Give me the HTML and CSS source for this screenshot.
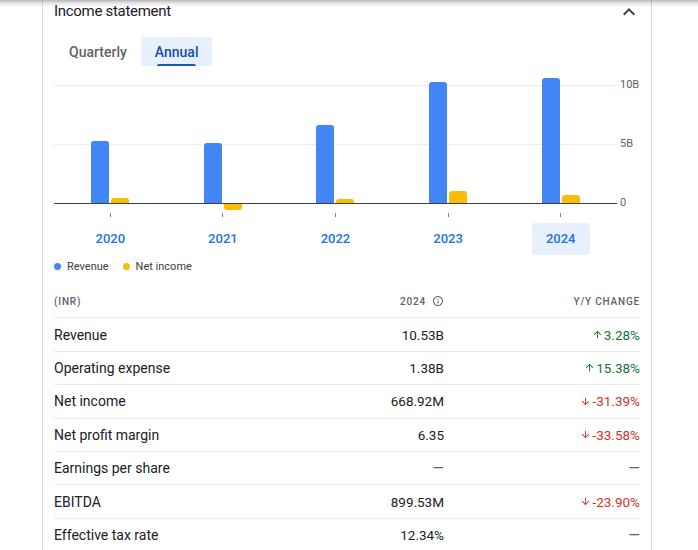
FILE: index.html
```html
<!DOCTYPE html>
<html lang="en">
<head>
<meta charset="utf-8">
<title>Income statement</title>
<link rel="stylesheet" href="styles.css">
</head>
<body>
<div class="shade"></div>
<section class="card">
  <div class="head">
    <h2 class="title">Income statement</h2>
    <span class="chev"><svg viewBox="0 0 24 24" width="24" height="24"><path d="M12 8l-6 6 1.41 1.41L12 10.83l4.59 4.58L18 14z"/></svg></span>
  </div>
  <div class="tabs">
    <button class="tab">Quarterly</button>
    <button class="tab active">Annual</button>
  </div>
  <div class="chart">
    <div class="plot">
      <div class="slot"><span class="bar rev" style="height:62px"></span><span class="bar net" style="height:5px"></span></div>
      <div class="slot"><span class="bar rev" style="height:60px"></span><span class="bar net neg" style="height:6px"></span></div>
      <div class="slot"><span class="bar rev" style="height:78px"></span><span class="bar net" style="height:4px"></span></div>
      <div class="slot"><span class="bar rev" style="height:121px"></span><span class="bar net" style="height:12px"></span></div>
      <div class="slot"><span class="bar rev" style="height:125px"></span><span class="bar net" style="height:8px"></span></div>
    </div>
    <div class="axis"><span>10B</span><span>5B</span><span>0</span></div>
    <div class="ticks"><span class="tick"></span><span class="tick"></span><span class="tick"></span><span class="tick"></span><span class="tick"></span></div>
    <div class="years">
      <div class="year"><span>2020</span></div>
      <div class="year"><span>2021</span></div>
      <div class="year"><span>2022</span></div>
      <div class="year"><span>2023</span></div>
      <div class="year sel"><span>2024</span></div>
    </div>
  </div>
  <div class="legend">
    <span class="legend-item"><span class="dot dot-rev"></span>Revenue</span>
    <span class="legend-item"><span class="dot dot-net"></span>Net income</span>
  </div>
  <div class="fin">
    <div class="row hdr">
      <span>(INR)</span>
      <span class="num hdr-year">2024 <svg viewBox="0 0 24 24" width="12" height="12"><path d="M11 7h2v2h-2zm0 4h2v6h-2zm1-9C6.48 2 2 6.48 2 12s4.48 10 10 10 10-4.48 10-10S17.52 2 12 2zm0 18c-4.41 0-8-3.59-8-8s3.59-8 8-8 8 3.59 8 8-3.59 8-8 8z"/></svg></span>
      <span class="chg">Y/Y change</span>
    </div>
    <div class="row">
      <span class="label">Revenue</span><span class="num">10.53B</span>
      <span class="chg up"><svg viewBox="0 0 24 24" width="11" height="11"><path d="M4 12l1.41 1.41L11 7.830V20h2V7.83l5.58 5.59L20 12l-8-8-8 8z"/></svg>3.28%</span>
    </div>
    <div class="row">
      <span class="label">Operating expense</span><span class="num">1.38B</span>
      <span class="chg up"><svg viewBox="0 0 24 24" width="11" height="11"><path d="M4 12l1.41 1.41L11 7.83V20h2V7.83l5.58 5.59L20 12l-8-8-8 8z"/></svg>15.38%</span>
    </div>
    <div class="row">
      <span class="label">Net income</span><span class="num">668.92M</span>
      <span class="chg down"><svg viewBox="0 0 24 24" width="11" height="11"><path d="M20 12l-1.41-1.41L13 16.17V4h-2v12.17l-5.58-5.59L4 12l8 8 8-8z"/></svg>-31.39%</span>
    </div>
    <div class="row">
      <span class="label">Net profit margin</span><span class="num">6.35</span>
      <span class="chg down"><svg viewBox="0 0 24 24" width="11" height="11"><path d="M20 12l-1.41-1.41L13 16.17V4h-2v12.17l-5.58-5.59L4 12l8 8 8-8z"/></svg>-33.58%</span>
    </div>
    <div class="row">
      <span class="label">Earnings per share</span><span class="num dash">—</span>
      <span class="chg dash">—</span>
    </div>
    <div class="row">
      <span class="label">EBITDA</span><span class="num">899.53M</span>
      <span class="chg down"><svg viewBox="0 0 24 24" width="11" height="11"><path d="M20 12l-1.41-1.41L13 16.17V4h-2v12.17l-5.58-5.59L4 12l8 8 8-8z"/></svg>-23.90%</span>
    </div>
    <div class="row">
      <span class="label">Effective tax rate</span><span class="num">12.34%</span>
      <span class="chg dash">—</span>
    </div>
  </div>
</section>
</body>
</html>
```
FILE: styles.css
```css
* { box-sizing: border-box; }
body {
  margin: 0;
  background: #fff;
  font-family: Roboto, "Noto Sans", Arial, sans-serif;
  color: #202124;
}
.shade {
  position: fixed;
  top: 0; left: 0; right: 0;
  height: 7px;
  background: linear-gradient(to bottom, rgba(0,0,0,0.28), rgba(0,0,0,0.1) 45%, rgba(0,0,0,0));
  pointer-events: none;
  z-index: 5;
}
.card {
  margin-left: 42px;
  width: 610px;
  min-height: 550px;
  border-left: 1px solid #dadce0;
  border-right: 1px solid #dadce0;
  padding: 0 11px;
}
.head {
  display: flex;
  justify-content: space-between;
  align-items: flex-start;
  height: 22px;
}
.title {
  margin: 1px 0 0;
  font-size: 15px;
  line-height: 20px;
  font-weight: 400;
  letter-spacing: -0.3px;
  color: #202124;
}
.chev { width: 24px; height: 24px; margin-right: -1px; color: #3c4043; }
.chev svg { display: block; fill: currentColor; }

.tabs { display: flex; margin-top: 15px; height: 29px; }
.tab {
  position: relative;
  border: 0;
  background: transparent;
  font: 500 14px Roboto, sans-serif;
  color: #5f6368;
  padding: 0 14px;
  height: 29px;
  cursor: pointer;
}
.tab:first-child { margin-left: 1px; }
.tab.active { background: #e8f0fe; color: #174ea6; }
.tab.active::after {
  content: "";
  position: absolute;
  left: 16px; right: 16px; bottom: 0;
  height: 2px;
  border-radius: 2px 2px 0 0;
  background: #185abc;
}

.chart {
  display: grid;
  grid-template-columns: 563px 23px;
  margin-top: 4px;
}
.plot {
  height: 134px;
  display: flex;
  border-bottom: 1px solid #3c4043;
  background:
    linear-gradient(#eeeeee, #eeeeee) 0 15px / 100% 1px no-repeat,
    linear-gradient(#eeeeee, #eeeeee) 0 74px / 100% 1px no-repeat;
}
.slot {
  flex: 1;
  display: flex;
  justify-content: center;
  align-items: flex-end;
  gap: 2px;
}
.bar { width: 18px; border-radius: 3px 3px 0 0; }
.rev { background: #4285f4; }
.net { background: #fbbc04; }
.net.neg { border-radius: 0 0 3px 3px; margin-bottom: -7px; }
.axis {
  height: 134px;
  display: flex;
  flex-direction: column;
  gap: 45px;
  padding: 8px 0 0 3px;
  font-size: 11px;
  line-height: 14px;
  color: #5f6368;
}
.ticks { grid-column: 1; display: flex; margin-top: 9px; height: 4px; }
.tick { flex: 1; background: linear-gradient(#80868b, #80868b) center / 1px 100% no-repeat; }
.years { grid-column: 1; display: flex; margin-top: 6px; }
.year { flex: 1; display: flex; justify-content: center; }
.year span {
  width: 58px;
  height: 32px;
  border-radius: 4px;
  font-size: 13px;
  font-weight: 500;
  line-height: 32px;
  text-align: center;
  color: #1a73e8;
}
.year.sel span { background: #e8f0fe; }

.legend {
  display: flex;
  align-items: center;
  height: 14px;
  margin-top: 4px;
  font-size: 11px;
  color: #3c4043;
}
.legend-item { display: flex; align-items: center; gap: 6px; margin-right: 14px; }
.dot { width: 7px; height: 7px; border-radius: 50%; }
.dot-rev { background: #4285f4; }
.dot-net { background: #fbbc04; }

.fin { margin-top: 12px; }
.row {
  display: grid;
  grid-template-columns: 1fr 130px 196px;
  align-items: center;
  height: 33.4px;
  border-bottom: 1px solid #e8eaed;
  font-size: 13.5px;
  font-weight: 400;
  color: #202124;
}
.row .label { font-size: 14px; }
.row.hdr {
  font-size: 10px;
  font-weight: 500;
  letter-spacing: 0.8px;
  color: #5f6368;
  text-transform: uppercase;
}
.num { text-align: right; }
.hdr-year { display: flex; justify-content: flex-end; align-items: center; gap: 6px; }
.hdr-year svg { fill: #5f6368; }
.chg { display: flex; justify-content: flex-end; align-items: center; gap: 1px; }
.chg svg { fill: currentColor; }
.up { color: #137333; }
.down { color: #d93025; }
.dash { color: #5f6368; font-size: 15px; }
```
